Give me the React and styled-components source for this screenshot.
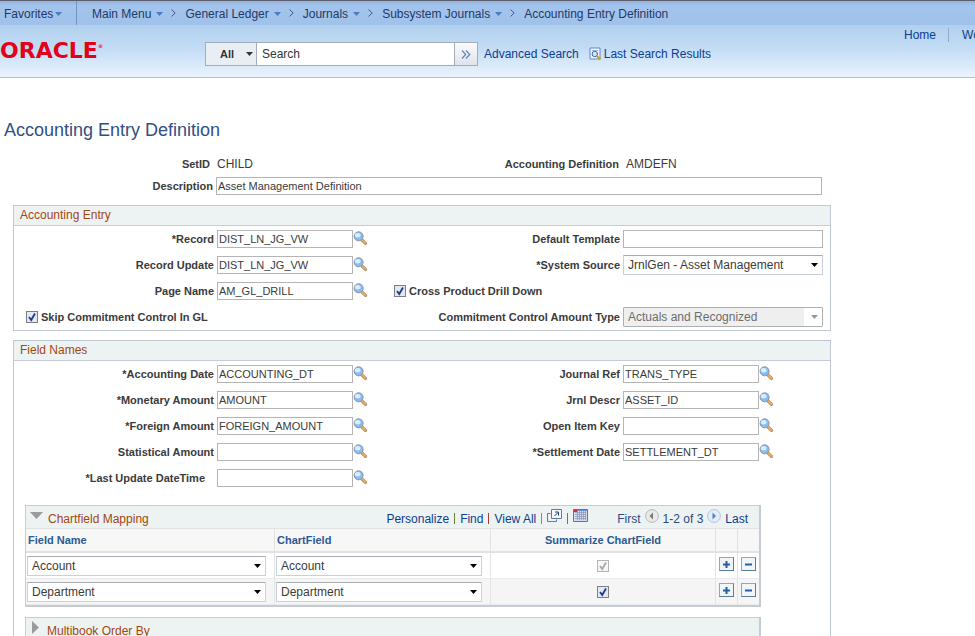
import React from "react";
import styled, { createGlobalStyle } from "styled-components";

const GlobalStyle = createGlobalStyle`
  html {
    scrollbar-width: none;
  }
  body {
    margin: 0;
    background: #fff;
    color: #3b3b3b;
    font-family: "Liberation Sans", Arial, sans-serif;
    font-size: 12px;
    overflow-x: hidden;
  }
  *, *::before, *::after {
    box-sizing: border-box;
  }
  input, select, button {
    font-family: inherit;
    margin: 0;
  }
  a {
    color: #0b3d91;
    text-decoration: none;
  }
`;

const arrow = (color) =>
  `url("data:image/svg+xml,%3Csvg xmlns='http://www.w3.org/2000/svg' width='7' height='4'%3E%3Cpath d='M0 0h7L3.5 4z' fill='%23${color}'/%3E%3C/svg%3E")`;

const tick = (color) =>
  `url("data:image/svg+xml,%3Csvg xmlns='http://www.w3.org/2000/svg' width='10' height='10'%3E%3Cpath d='M2 5l2.2 3L8 1.5' fill='none' stroke='%23${color}' stroke-width='1.8'/%3E%3C/svg%3E")`;

/* top bars */

const Breadcrumbs = styled.nav`
  display: flex;
  align-items: center;
  height: 25px;
  border-top: 1px solid #5b5f6b;
  background: linear-gradient(#94b3de, #a3c4ec 20%, #9fc2ea);
  white-space: nowrap;
`;

const Crumb = styled.a`
  display: flex;
  align-items: center;
  gap: 5px;
  padding-top: 1px;
  color: #1f3864;
`;

const FavoritesCrumb = styled(Crumb)`
  align-self: stretch;
  gap: 2px;
  width: 77px;
  padding-left: 4px;
  margin-right: 15px;
  border-right: 1px solid #7593c4;
`;

const CrumbSep = styled.svg`
  margin: 0 9px 0 8px;
`;

const Header = styled.header`
  display: flex;
  align-items: center;
  height: 53px;
  padding-top: 6px;
  overflow: hidden;
  white-space: nowrap;
  border-bottom: 1px solid #b3c0cc;
  background: linear-gradient(#b1d0ee, #c3dcf5 45%, #eaf3fd);
`;

const Logo = styled.a`
  flex: 0 0 205px;
  margin-top: -6px;
  color: #e2001a;
  font-family: "DejaVu Sans", sans-serif;
  font-size: 22px;
  font-weight: bold;
  line-height: 24px;

  sup {
    font-size: 5px;
    line-height: 5px;
    vertical-align: 10px;
  }
`;

const SearchForm = styled.form`
  display: flex;
  height: 24px;
`;

const ScopeSelect = styled.select`
  appearance: none;
  width: 52px;
  padding: 0 0 0 14px;
  border: 1px solid #a3aebb;
  border-radius: 0;
  background: #e9eef4 ${arrow("333333")} no-repeat right 3px center;
  color: #333;
  font-size: 11px;
  font-weight: bold;
`;

const SearchInput = styled.input`
  width: 198px;
  padding: 0 5px;
  border: 1px solid #a3aebb;
  border-left: 0;
  border-radius: 0;
  background: #fff;
  color: #333;
  font-size: 12px;

  &::placeholder {
    color: #333;
    opacity: 1;
  }
`;

const SearchButton = styled.button`
  display: flex;
  align-items: center;
  justify-content: center;
  width: 23px;
  padding: 0;
  border: 1px solid #a3aebb;
  border-left: 0;
  background: linear-gradient(#fafafa, #dfe4ea);
`;

const SearchLink = styled.a`
  display: flex;
  align-items: center;
  gap: 2px;
  margin-left: ${(props) => (props.$far ? "10px" : "6px")};
`;

const UserLinks = styled.nav`
  display: flex;
  align-self: flex-start;
  flex: 0 0 71px;
  min-width: 0;
  margin: -3px 0 0 auto;
  line-height: 14px;

  a + a {
    margin-left: 12px;
    padding-left: 13px;
    border-left: 1px solid #94a9cb;
  }
`;

/* page */

const Main = styled.main`
  max-width: 831px;
  padding: 42px 0 0 13px;
`;

const Title = styled.h1`
  margin: 0 0 0 -9px;
  color: #2f4f85;
  font-size: 18px;
  font-weight: normal;
  line-height: 20px;
`;

const Summary = styled.div`
  padding: 13px 0 8px;
`;

const SummaryRow = styled.div`
  display: grid;
  grid-template-columns: 203px 1fr 206px;
  align-items: center;
  min-height: 22px;
`;

const Label = styled.label`
  padding-right: ${(props) => props.$gap || "3px"};
  color: #3b3b3b;
  font-size: 11px;
  font-weight: bold;
  text-align: right;
  white-space: nowrap;
`;

const Static = styled.output`
  padding-left: 1px;
  font-size: 12px;
`;

const SummaryPair = styled.div`
  display: flex;
  align-items: center;
  justify-content: space-between;
  grid-column: ${(props) => (props.$end ? "2 / 4" : "auto")};
  padding-right: ${(props) => (props.$end ? "9px" : "0")};
`;

const TextInput = styled.input`
  width: ${(props) => props.$width || "100%"};
  height: 18px;
  padding: 0 1px;
  border: 1px solid #b5b5b5;
  border-radius: 0;
  background: #fff;
  color: #3b3b3b;
  font-size: 11px;
`;

const Select = styled.select`
  appearance: none;
  width: ${(props) => props.$width || "200px"};
  height: 20px;
  padding: 0 16px 0 4px;
  border: 1px solid #c9d0dc;
  border-top-color: #a9abb3;
  border-radius: 1px;
  background: #fff ${arrow("000000")} no-repeat right 4px center;
  color: #3b3b3b;
  font-size: 12px;

  &:disabled {
    border-color: #b0b0b0;
    background: ${arrow("999999")} no-repeat right 4px center,
      linear-gradient(90deg, #efefef calc(100% - 18px), #fff 0);
    color: #6d6d6d;
    opacity: 1;
  }
`;

const Checkbox = styled.input`
  appearance: none;
  flex: none;
  width: 12px;
  height: 12px;
  border: 1px solid #7d8088;
  background: #e3e7ef;

  &:checked {
    background: #e3e7ef ${tick("1f3a93")} no-repeat center;
  }

  &:disabled {
    border-color: #b4b4b4;
    background: #f6f6f6 ${tick("a8a8a8")} no-repeat center;
  }
`;

const CheckLabel = styled.label`
  display: flex;
  align-items: center;
  gap: 3px;
  grid-column: ${(props) => (props.$start ? "1 / 3" : "auto")};
  padding-left: ${(props) => (props.$start ? "12px" : "14px")};
  font-size: 11px;
  font-weight: bold;
`;

const Section = styled.section`
  margin-bottom: 9px;
  border: 1px solid #c0c8d4;
`;

const SectionTitle = styled.h2`
  height: 20px;
  margin: 0;
  padding-left: 6px;
  border-bottom: 1px solid #c6ccd6;
  background: #edf3f3;
  color: #a3470f;
  font-size: 12px;
  font-weight: normal;
  line-height: 19px;
`;

const FieldRow = styled.div`
  display: grid;
  grid-template-columns: 203px 163px 1fr 207px;
  align-items: center;
  height: 26px;
`;

const Control = styled.div`
  display: flex;
  align-items: center;
`;

const IconButton = styled.button`
  display: flex;
  padding: 0 0 2px;
  border: 0;
  background: none;
`;

/* chartfield grid */

const Panel = styled.div`
  margin: ${(props) => (props.$first ? "14px" : "10px")} 69px 0 11px;
  border: 1px solid #c6ccd3;
  border-right-width: 2px;
  border-bottom-width: 2px;
`;

const PanelHead = styled.div`
  display: flex;
  align-items: center;
  height: 22px;
  padding: 3px 11px 0 4px;
  background: #edf3f3;
  white-space: nowrap;
`;

const PanelTitle = styled.h3`
  flex: 1;
  margin: 0;
  padding-left: 5px;
  color: #a3470f;
  font-size: 12px;
  font-weight: normal;
`;

const Tools = styled.div`
  display: flex;
  align-items: center;
  gap: 5px;
  margin-right: 29px;
`;

const Bar = styled.span`
  width: 1px;
  height: 11px;
  background: ${(props) => props.$color};
`;

const Raised = styled.button`
  display: flex;
  padding: 0 0 6px;
  border: 0;
  background: none;
`;

const Pager = styled.div`
  display: flex;
  align-items: center;
  gap: 4px;
  color: #2d4a80;
`;

const Table = styled.table`
  width: 100%;
  table-layout: fixed;
  border-collapse: separate;
  border-spacing: 0;

  tbody tr:nth-child(even) {
    background: #f5f5f5;
  }
`;

const Th = styled.th`
  height: 25px;
  padding: 0 2px;
  border: solid #e2e2e2;
  border-width: 1px 1px 2px 0;
  background: #f7f7f7;
  color: #2c5a94;
  font-size: 11px;
  text-align: ${(props) => (props.$center ? "center" : "left")};

  &:last-child {
    border-right: 0;
  }
`;

const Td = styled.td`
  height: 26px;
  padding: ${(props) => (props.$raise ? "0 1px 3px" : "0 1px")};
  border-right: 1px solid #e4e4e4;
  border-bottom: 1px solid #ebebeb;
  text-align: ${(props) => (props.$center ? "center" : "left")};
  vertical-align: middle;

  &:last-child {
    border-right: 0;
  }

  & > * {
    vertical-align: middle;
  }
`;

const RowButton = styled.button`
  display: flex;
  align-items: center;
  justify-content: center;
  width: 15px;
  height: 14px;
  margin: 0 auto;
  padding: 0;
  border: 1px solid #8fa9b8;
  border-right-color: #5f7d90;
  border-bottom-color: #5f7d90;
  background: #f0f5fa;
`;

const CaretIcon = () => (
  <svg width="7" height="4" viewBox="0 0 7 4">
    <path d="M0 0h7L3.5 4z" fill="#4a7cc0" />
  </svg>
);

const ChevronIcon = () => (
  <CrumbSep width="5" height="8" viewBox="0 0 5 8">
    <path d="M.5 .5L4.2 4 .5 7.5" fill="none" stroke="#3d5a8c" />
  </CrumbSep>
);

const LookupIcon = () => (
  <svg width="15" height="15" viewBox="0 0 15 15">
    <path d="M9 9l3.5 3.3" stroke="#a98b78" strokeWidth="3.2" strokeLinecap="round" />
    <path d="M9.2 9l3.1 3" stroke="#f0a855" strokeWidth="2" strokeLinecap="round" />
    <circle cx="5.6" cy="5.3" r="4.5" fill="#86bdf2" stroke="#8795a8" />
    <ellipse cx="4.7" cy="4.2" rx="2.8" ry="2.2" fill="#d9edff" />
  </svg>
);

const ResultsIcon = () => (
  <svg width="13" height="14" viewBox="0 0 13 14">
    <path d="M1 1h10v11H1z" fill="#f2f7ff" stroke="#5d88cf" />
    <path d="M3 3.5h6" stroke="#9ab7e4" />
    <circle cx="5.8" cy="7" r="2.7" fill="#d5e7fb" stroke="#3f65a0" />
    <path d="M8 9.2l3.5 3.3" stroke="#c3a11c" strokeWidth="2" />
  </svg>
);

const PopoutIcon = () => (
  <svg width="15" height="13" viewBox="0 0 15 13">
    <path d="M3.5 4.5h-3v8h9v-2" fill="none" stroke="#5c7aa5" />
    <path d="M4.5 .5h10v9h-10z" fill="#f4f8fd" stroke="#5c7aa5" />
    <path d="M7.5 7L11 3.5M8 3h3.5v3.5" fill="none" stroke="#26436f" />
  </svg>
);

const SheetIcon = () => (
  <svg width="15" height="13" viewBox="0 0 15 13">
    <path d="M.5 .5h14v12H.5z" fill="#d6dceb" stroke="#5273c3" />
    <path d="M2 3.5h11M2 5.5h11M2 7.5h11M2 9.5h11M4.5 2v9M6.5 2v9M8.5 2v9M10.5 2v9M12.5 2v9" stroke="#8994b4" strokeWidth=".7" />
    <path d="M1 1.5h13" stroke="#6d8fdd" />
    <path d="M1 1h3v2H1z" fill="#e02424" />
  </svg>
);

const PageIcon = ({ next }) => (
  <svg width="14" height="14" viewBox="0 0 14 14">
    <circle cx="7" cy="7" r="6.4" fill={next ? "#e3edf9" : "#e9e9e9"} stroke={next ? "#b5c4da" : "#b8b8b8"} />
    <path d={next ? "M5.5 3.5v7L9 7z" : "M8 3.5v7L4.5 7z"} fill={next ? "#4f83d0" : "#787878"} />
  </svg>
);

const Lookup = ({ label }) => (
  <IconButton type="button" aria-label={`Look up ${label}`}>
    <LookupIcon />
  </IconButton>
);

const LookupField = ({ id, value, label }) => (
  <Control>
    <TextInput id={id} defaultValue={value} $width="136px" />
    <Lookup label={label} />
  </Control>
);

const crumbs = ["Main Menu", "General Ledger", "Journals", "Subsystem Journals"];

const fieldNames = [
  [
    { id: "acctDate", label: "*Accounting Date", value: "ACCOUNTING_DT" },
    { id: "jrnlRef", label: "Journal Ref", value: "TRANS_TYPE" },
  ],
  [
    { id: "monAmt", label: "*Monetary Amount", value: "AMOUNT" },
    { id: "jrnlDescr", label: "Jrnl Descr", value: "ASSET_ID" },
  ],
  [
    { id: "forAmt", label: "*Foreign Amount", value: "FOREIGN_AMOUNT" },
    { id: "openItem", label: "Open Item Key", value: "" },
  ],
  [
    { id: "statAmt", label: "Statistical Amount", value: "" },
    { id: "settleDate", label: "*Settlement Date", value: "SETTLEMENT_DT" },
  ],
  [{ id: "lastUpd", label: "*Last Update DateTime", value: "", gap: "12px" }],
];

const mappings = [
  { name: "Account", disabled: true },
  { name: "Department", disabled: false },
];

const TopBars = () => (
  <>
    <Breadcrumbs>
      <FavoritesCrumb href="#favorites">
        Favorites <CaretIcon />
      </FavoritesCrumb>
      {crumbs.map((item) => (
        <React.Fragment key={item}>
          <Crumb href="#menu">
            {item} <CaretIcon />
          </Crumb>
          <ChevronIcon />
        </React.Fragment>
      ))}
      <Crumb href="#definition">Accounting Entry Definition</Crumb>
    </Breadcrumbs>
    <Header>
      <Logo href="#home">
        ORACLE<sup>®</sup>
      </Logo>
      <SearchForm onSubmit={(e) => e.preventDefault()}>
        <ScopeSelect aria-label="Search scope">
          <option>All</option>
        </ScopeSelect>
        <SearchInput aria-label="Search" placeholder="Search" />
        <SearchButton aria-label="Go">
          <svg width="10" height="9" viewBox="0 0 10 9">
            <path d="M1 .5l3.7 4L1 8.5M5 .5l3.7 4L5 8.5" fill="none" stroke="#6085b5" strokeWidth="1.2" />
          </svg>
        </SearchButton>
      </SearchForm>
      <SearchLink href="#advanced">Advanced Search</SearchLink>
      <SearchLink href="#results" $far>
        <ResultsIcon /> Last Search Results
      </SearchLink>
      <UserLinks>
        <a href="#home">Home</a>
        <a href="#worklist">Worklist</a>
      </UserLinks>
    </Header>
  </>
);

const AccountingEntry = () => (
  <Section>
    <SectionTitle>Accounting Entry</SectionTitle>
    <FieldRow>
      <Label htmlFor="record">*Record</Label>
      <LookupField id="record" value="DIST_LN_JG_VW" label="Record" />
      <Label htmlFor="template">Default Template</Label>
      <Control>
        <TextInput id="template" $width="200px" />
      </Control>
    </FieldRow>
    <FieldRow>
      <Label htmlFor="recordUpd">Record Update</Label>
      <LookupField id="recordUpd" value="DIST_LN_JG_VW" label="Record Update" />
      <Label htmlFor="source">*System Source</Label>
      <Select id="source">
        <option>JrnlGen - Asset Management</option>
      </Select>
    </FieldRow>
    <FieldRow>
      <Label htmlFor="pageName">Page Name</Label>
      <LookupField id="pageName" value="AM_GL_DRILL" label="Page Name" />
      <CheckLabel>
        <Checkbox type="checkbox" defaultChecked /> Cross Product Drill Down
      </CheckLabel>
    </FieldRow>
    <FieldRow>
      <CheckLabel $start>
        <Checkbox type="checkbox" defaultChecked /> Skip Commitment Control In GL
      </CheckLabel>
      <Label htmlFor="amountType">Commitment Control Amount Type</Label>
      <Select id="amountType" disabled>
        <option>Actuals and Recognized</option>
      </Select>
    </FieldRow>
  </Section>
);

const ChartfieldMapping = () => (
  <Panel $first>
    <PanelHead>
      <Raised type="button" aria-label="Collapse section">
        <svg width="13" height="7" viewBox="0 0 13 7">
          <path d="M0 0h13L6.5 7z" fill="#9b9b9b" />
        </svg>
      </Raised>
      <PanelTitle>Chartfield Mapping</PanelTitle>
      <Tools>
        <a href="#personalize">Personalize</a>
        <Bar $color="#6c7a3a" />
        <a href="#find">Find</a>
        <Bar $color="#b03a3a" />
        <a href="#all">View All</a>
        <Bar $color="#b5795c" />
        <Raised type="button" aria-label="Zoom grid">
          <PopoutIcon />
        </Raised>
        <Bar $color="#7c7a2a" />
        <Raised type="button" aria-label="Download to spreadsheet">
          <SheetIcon />
        </Raised>
      </Tools>
      <Pager>
        First
        <Raised type="button" aria-label="Previous rows">
          <PageIcon />
        </Raised>
        1-2 of 3
        <Raised type="button" aria-label="Next rows">
          <PageIcon next />
        </Raised>
        <a href="#last">Last</a>
      </Pager>
    </PanelHead>
    <Table>
      <colgroup>
        <col />
        <col width="216" />
        <col width="225" />
        <col width="22" />
        <col width="21" />
      </colgroup>
      <thead>
        <tr>
          <Th>Field Name</Th>
          <Th>ChartField</Th>
          <Th $center>Summarize ChartField</Th>
          <Th />
          <Th />
        </tr>
      </thead>
      <tbody>
        {mappings.map(({ name, disabled }) => (
          <tr key={name}>
            <Td>
              <Select aria-label="Field Name" $width="239px">
                <option>{name}</option>
              </Select>
            </Td>
            <Td>
              <Select aria-label="ChartField" $width="206px">
                <option>{name}</option>
              </Select>
            </Td>
            <Td $center>
              <Checkbox type="checkbox" aria-label="Summarize ChartField" defaultChecked disabled={disabled} />
            </Td>
            <Td $raise>
              <RowButton type="button" aria-label="Add row">
                <svg width="9" height="9" viewBox="0 0 9 9">
                  <path d="M4.5 1v7M1 4.5h7" stroke="#215fa6" strokeWidth="2" />
                </svg>
              </RowButton>
            </Td>
            <Td $raise>
              <RowButton type="button" aria-label="Delete row">
                <svg width="9" height="9" viewBox="0 0 9 9">
                  <path d="M1 4.5h7" stroke="#215fa6" strokeWidth="2" />
                </svg>
              </RowButton>
            </Td>
          </tr>
        ))}
      </tbody>
    </Table>
  </Panel>
);

const FieldNames = () => (
  <Section>
    <SectionTitle>Field Names</SectionTitle>
    {fieldNames.map((row, i) => (
      <FieldRow key={i}>
        {row.map(({ id, label, value, gap }) => (
          <React.Fragment key={id}>
            <Label htmlFor={id} $gap={gap}>
              {label}
            </Label>
            <LookupField id={id} value={value} label={label} />
          </React.Fragment>
        ))}
      </FieldRow>
    ))}
    <ChartfieldMapping />
    <Panel>
      <PanelHead>
        <Raised type="button" aria-label="Expand section">
          <svg width="12" height="13" viewBox="0 0 12 13">
            <path d="M2 0v13L9 6.5z" fill="#9b9b9b" />
          </svg>
        </Raised>
        <PanelTitle>Multibook Order By</PanelTitle>
      </PanelHead>
    </Panel>
  </Section>
);

const App = () => {
  return (
    <>
      <GlobalStyle />
      <TopBars />
      <Main>
        <Title>Accounting Entry Definition</Title>
        <Summary>
          <SummaryRow>
            <Label as="span" $gap="6px">
              SetID
            </Label>
            <SummaryPair>
              <Static>CHILD</Static>
              <Label as="span" $gap="6px">
                Accounting Definition
              </Label>
            </SummaryPair>
            <Static>AMDEFN</Static>
          </SummaryRow>
          <SummaryRow>
            <Label htmlFor="descr">Description</Label>
            <SummaryPair $end>
              <TextInput id="descr" defaultValue="Asset Management Definition" />
            </SummaryPair>
          </SummaryRow>
        </Summary>
        <AccountingEntry />
        <FieldNames />
      </Main>
    </>
  );
};

export default App;
